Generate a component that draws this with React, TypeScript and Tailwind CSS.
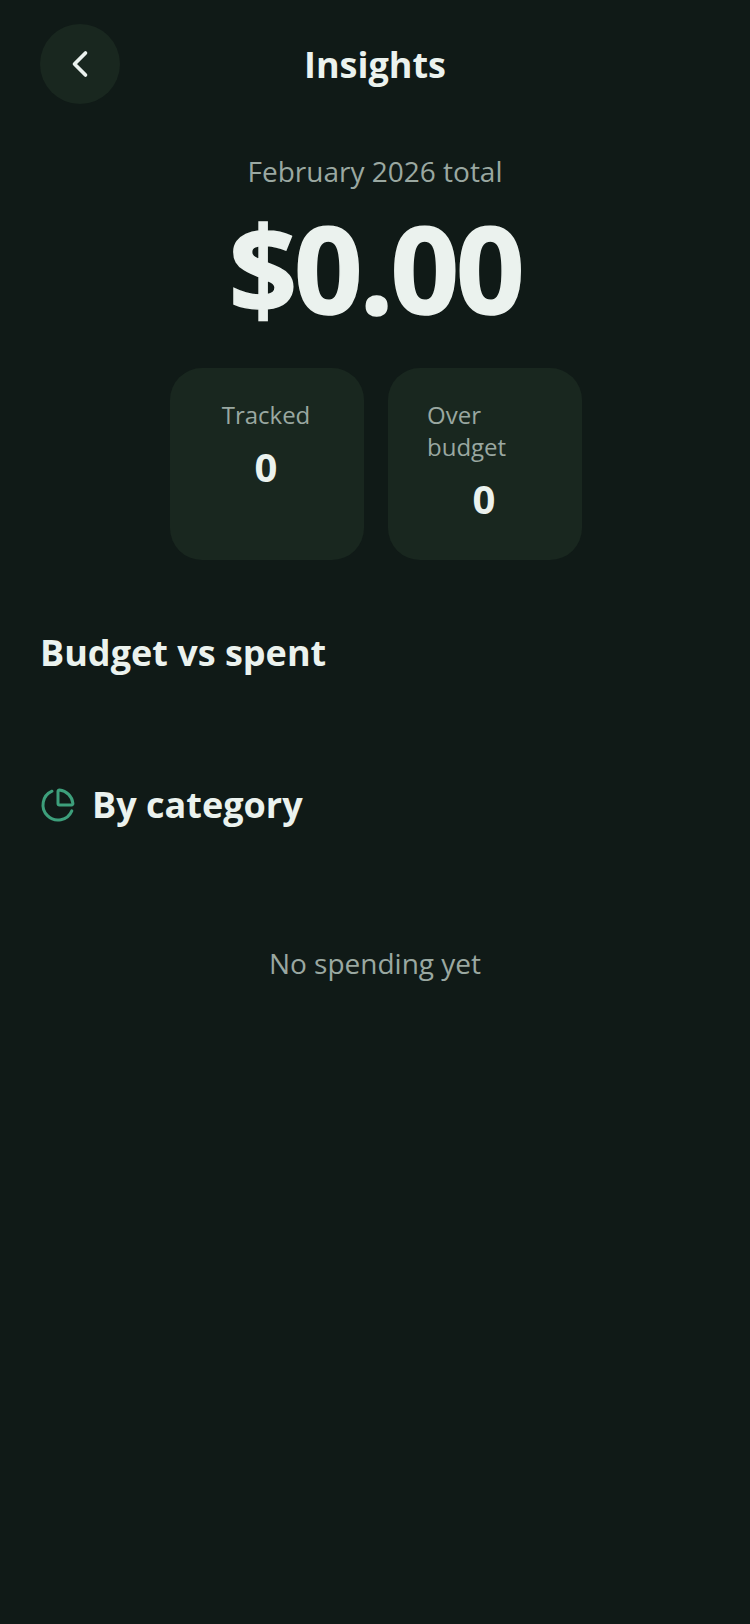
import { ChevronLeft, ChartPie } from "lucide-react";

export default function App() {
  return (
    <div className="min-h-[1624px] w-[750px] bg-[#101a17] pt-[24px] font-['Open_Sans',sans-serif] text-[#ebf2ee]">
      <header className="relative flex h-[80px] items-center justify-center">
        <button className="absolute left-[40px] top-0 flex h-[80px] w-[80px] items-center justify-center rounded-full bg-[#19271f]">
          <ChevronLeft size={44} strokeWidth={2} color="#ebf2ee" />
        </button>
        <h1 className="pt-[2px] text-[36px] font-bold leading-[48px]">Insights</h1>
      </header>
      <div className="flex flex-col items-center pt-[47px]">
        <p className="text-[28px] leading-[40px] text-[#9aa8a1]">February 2026 total</p>
        <p className="mt-[9px] text-[120px] font-bold leading-[136px] tracking-[-3.2px] text-[#ebf2ee] [-webkit-text-stroke:1.5px_#ebf2ee]">$0.00</p>
        <div className="ml-[2px] mt-[32px] flex gap-[24px]">
          <div className="flex h-[192px] w-[194px] flex-col items-center rounded-[32px] bg-[#19271f] py-[31px] pl-[39px] pr-[41px]">
            <span className="text-[24px] leading-[32px] text-[#9aa8a1]">Tracked</span>
            <span className="mt-[12px] text-[40px] font-bold leading-[48px]">0</span>
          </div>
          <div className="flex h-[192px] w-[194px] flex-col items-center rounded-[32px] bg-[#19271f] py-[31px] pl-[39px] pr-[41px]">
            <span className="text-[24px] leading-[32px] text-[#9aa8a1]">Over budget</span>
            <span className="mt-[12px] text-[40px] font-bold leading-[48px]">0</span>
          </div>
        </div>
      </div>
      <section className="mt-[69px] px-[40px]">
        <h2 className="text-[36px] font-bold leading-[48px]">Budget vs spent</h2>
      </section>
      <section className="mt-[104px] flex items-center gap-[16px] px-[40px]">
        <ChartPie size={36} strokeWidth={2} color="#3d9f7b" />
        <h2 className="text-[36px] font-bold leading-[48px]">By category</h2>
      </section>
      <p className="mt-[114px] text-center text-[28px] leading-[40px] text-[#9aa8a1]">No spending yet</p>
    </div>
  );
}
